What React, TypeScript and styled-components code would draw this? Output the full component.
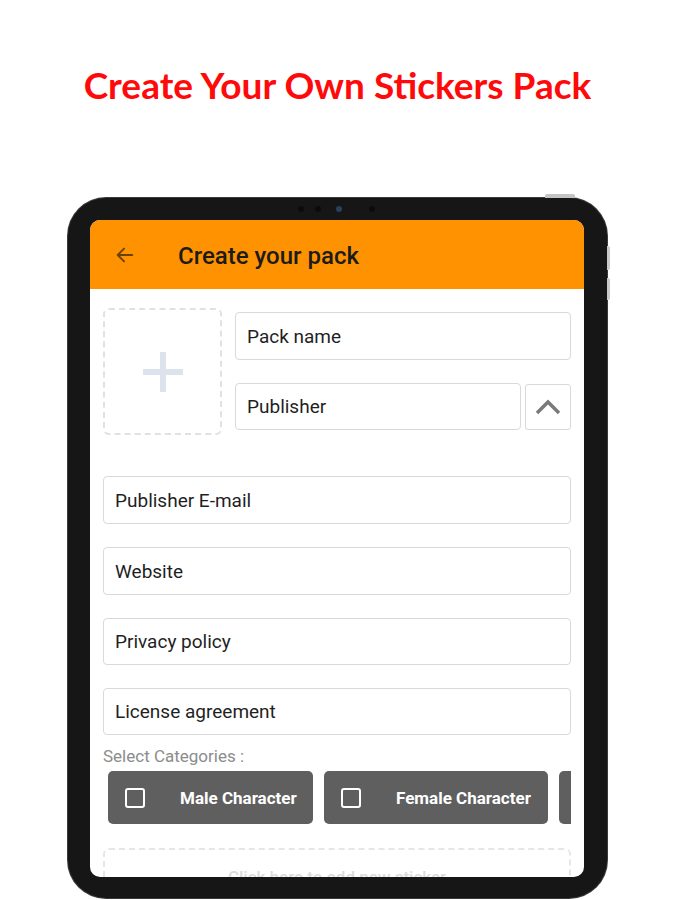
import React from "react";
import styled, { createGlobalStyle } from "styled-components";

const Global = createGlobalStyle`
  html, body { margin: 0; padding: 0; background: #ffffff; }
  body { font-family: Roboto, "Noto Sans", sans-serif; }
  * { box-sizing: border-box; }
`;

const Page = styled.div`
  width: 675px;
  height: 900px;
  overflow: hidden;
  display: flex;
  flex-direction: column;
  align-items: center;
`;

const Headline = styled.h1`
  margin: 64px 0 0 0;
  height: 42px;
  line-height: 42px;
  font-family: Lato, "Open Sans", sans-serif;
  font-weight: 700;
  font-size: 37px;
  color: #ff0a0a;
  white-space: nowrap;
`;

const Tablet = styled.div`
  position: relative;
  margin-top: 92px;
  width: 539px;
  height: 700px;
  flex: none;
  padding: 22px 23px 0 22px;
  border-radius: 38px;
  background: #161616;
  box-shadow: 0 0 0 1px #3a3a3a;
`;

const TopButton = styled.div`
  position: absolute;
  top: -4px;
  left: 477px;
  width: 30px;
  height: 4px;
  border-radius: 2px 2px 0 0;
  background: #c4c4c4;
`;

const SideButton = styled.div<{ $top: number; $h: number }>`
  position: absolute;
  right: -3px;
  top: ${(p) => p.$top}px;
  width: 3px;
  height: ${(p) => p.$h}px;
  border-radius: 0 2px 2px 0;
  background: #c9c9c9;
`;

const CameraDot = styled.div<{ $x: number; $blue?: boolean }>`
  position: absolute;
  top: 8px;
  left: ${(p) => p.$x}px;
  width: 6px;
  height: 6px;
  border-radius: 50%;
  background: ${(p) => (p.$blue ? "#2a3f5c" : "#0b0b0b")};
`;

const Screen = styled.div`
  width: 494px;
  height: 657px;
  border-radius: 10px;
  overflow: hidden;
  background: #ffffff;
  display: flex;
  flex-direction: column;
`;

const AppBar = styled.div`
  height: 69px;
  flex: none;
  background: #ff9200;
  display: flex;
  align-items: center;
  padding-left: 24px;
`;

const BackIcon = styled.svg`
  width: 22px;
  height: 22px;
  margin-right: 42px;
`;

const AppTitle = styled.div`
  font-family: Roboto, sans-serif;
  font-weight: 500;
  font-size: 24px;
  color: #1b1b1b;
  margin-top: 2px;
`;

const Content = styled.div`
  padding: 19px 13px 0 13px;
  display: flex;
  flex-direction: column;
`;

const TopRow = styled.div`
  display: flex;
  gap: 13px;
`;

const Picker = styled.div`
  width: 119px;
  height: 127px;
  flex: none;
  border: 2px dashed #dfe1e4;
  border-radius: 6px;
  display: flex;
  align-items: center;
  justify-content: center;
`;

const RightCol = styled.div`
  flex: 1 1 auto;
  display: flex;
  flex-direction: column;
  gap: 23px;
  padding-top: 4px;
`;

const Field = styled.div<{ $h?: number }>`
  height: ${(p) => p.$h ?? 48}px;
  flex: 1 1 auto;
  min-width: 0;
  border: 1.5px solid #d9d9d9;
  border-radius: 4px;
  display: flex;
  align-items: center;
  padding-left: 11px;
  font-family: Roboto, sans-serif;
  font-size: 19px;
  color: #1f1f1f;
  background: #fff;
`;

const FieldRow = styled.div`
  display: flex;
  gap: 4px;
`;

const ChevronBox = styled.div`
  width: 46px;
  height: 46px;
  flex: none;
  border: 1.5px solid #d9d9d9;
  border-radius: 3px;
  display: flex;
  align-items: center;
  justify-content: center;
  margin-top: 1px;
`;

const FieldList = styled.div`
  display: flex;
  flex-direction: column;
  gap: 23px;
  margin-top: 41px;
`;

const SectionLabel = styled.div`
  margin-top: 11px;
  font-family: Roboto, sans-serif;
  font-size: 17px;
  color: #8c8c8c;
  height: 20px;
  line-height: 20px;
`;

const ChipScroll = styled.div`
  margin-top: 5px;
  display: flex;
  gap: 11px;
  padding-left: 5px;
  overflow: hidden;
`;

const Chip = styled.div<{ $w: number }>`
  flex: none;
  width: ${(p) => p.$w}px;
  height: 53px;
  border-radius: 5px;
  background: #5f5f5f;
  display: flex;
  align-items: center;
  padding-left: 17px;
  font-family: Roboto, sans-serif;
  font-weight: 700;
  font-size: 17px;
  color: #ffffff;
`;

const CheckBox = styled.div`
  width: 20px;
  height: 20px;
  border: 2px solid #ffffff;
  border-radius: 3px;
  margin-right: 35px;
  flex: none;
`;

const AddBox = styled.div`
  margin-top: 24px;
  height: 80px;
  flex: none;
  border: 2px dashed #e6e6e6;
  border-radius: 6px;
  display: flex;
  justify-content: center;
  padding-top: 17px;
  font-family: Roboto, sans-serif;
  font-weight: 500;
  font-size: 17px;
  color: #dcdcdc;
`;

export default function App() {
  return (
    <Page>
      <Global />
      <Headline>Create Your Own Stickers Pack</Headline>
      <Tablet>
        <TopButton />
        <SideButton $top={48} $h={24} />
        <SideButton $top={80} $h={22} />
        <CameraDot $x={230} />
        <CameraDot $x={247} />
        <CameraDot $x={268} $blue />
        <CameraDot $x={301} />
        <Screen>
          <AppBar>
            <BackIcon viewBox="0 0 24 24" fill="none" stroke="#6b4300" strokeWidth="2" strokeLinecap="round" strokeLinejoin="round">
              <path d="M20 12H4M11 5l-7 7 7 7" />
            </BackIcon>
            <AppTitle>Create your pack</AppTitle>
          </AppBar>
          <Content>
            <TopRow>
              <Picker>
                <svg width="44" height="44" viewBox="0 0 44 44">
                  <path d="M22 2v40M2 22h40" stroke="#dde3ec" strokeWidth="6" />
                </svg>
              </Picker>
              <RightCol>
                <FieldRow>
                  <Field>Pack name</Field>
                </FieldRow>
                <FieldRow>
                  <Field $h={47}>Publisher</Field>
                  <ChevronBox>
                    <svg width="26" height="16" viewBox="0 0 26 16">
                      <path d="M2 14L13 3l11 11" fill="none" stroke="#7a7a7a" strokeWidth="3.5" />
                    </svg>
                  </ChevronBox>
                </FieldRow>
              </RightCol>
            </TopRow>
            <FieldList>
              <Field>Publisher E-mail</Field>
              <Field>Website</Field>
              <Field $h={47}>Privacy policy</Field>
              <Field $h={47}>License agreement</Field>
            </FieldList>
            <SectionLabel>Select Categories :</SectionLabel>
            <ChipScroll>
              <Chip $w={205}><CheckBox />Male Character</Chip>
              <Chip $w={224}><CheckBox />Female Character</Chip>
              <Chip $w={200} />
            </ChipScroll>
            <AddBox>Click here to add new sticker</AddBox>
          </Content>
        </Screen>
      </Tablet>
    </Page>
  );
}
